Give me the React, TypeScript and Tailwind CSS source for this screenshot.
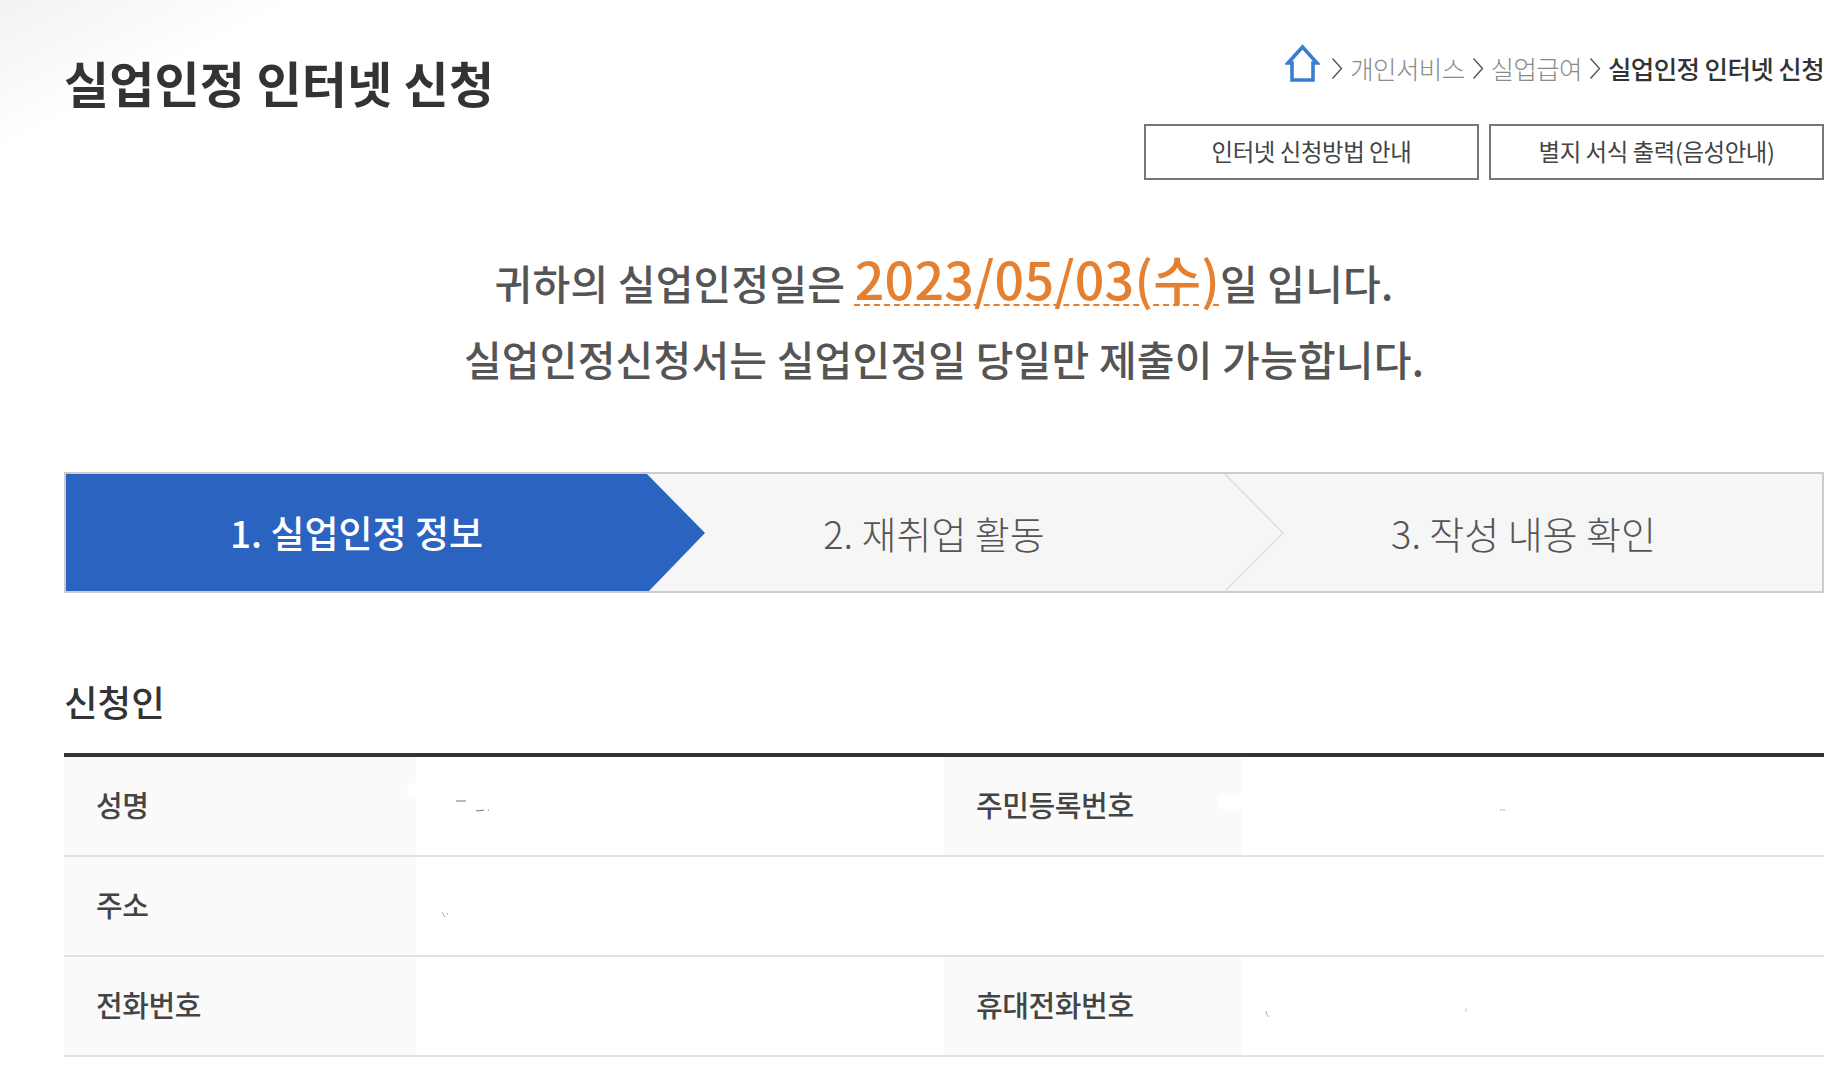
const font = "font-['Noto_Sans_CJK_KR',sans-serif]";

function Chevron() {
  return (
    <svg className="h-[23px] w-[12px] shrink-0" viewBox="0 0 12 23" fill="none" stroke="#555" strokeWidth="1.4">
      <path d="M1.5 1.5l9 10-9 10" />
    </svg>
  );
}

function HomeIcon() {
  return (
    <svg className="mb-[3px] h-[38px] w-[35px] shrink-0" viewBox="0 0 35 38" fill="none" stroke="#3b7dd0" strokeWidth="3.6">
      <path d="M3 19L17.5 3 32 19h-4v17H7V19z" />
    </svg>
  );
}

function Breadcrumb() {
  return (
    <nav className="flex h-[41px] items-end justify-end gap-[11px] text-[25.5px] leading-[34px] tracking-[-0.6px]">
      <HomeIcon />
      <span className="flex h-[34px] items-center gap-[7px]">
        <Chevron />
        <span className="font-light text-[#8a8a8a]">개인서비스</span>
        <Chevron />
        <span className="font-light text-[#8a8a8a]">실업급여</span>
        <Chevron />
        <span className="font-medium text-[#333]">실업인정 인터넷 신청</span>
      </span>
    </nav>
  );
}

function OutlineButton({ children }: { children: React.ReactNode }) {
  return (
    <button className="flex h-[56px] w-[335px] items-center justify-center border-2 border-[#777] bg-white text-[23.4px] text-[#444] tracking-[-0.4px]">
      {children}
    </button>
  );
}

function Steps() {
  return (
    <ol className="mt-[75px] flex h-[121px] border-2 border-[#ccc] bg-[#f6f6f6] text-[38px] font-light text-[#555]">
      <li className="relative flex w-[581px] items-center justify-center bg-[#2b63c0] text-[37px] font-medium text-white">
        <span>1. 실업인정 정보</span>
        <svg className="absolute left-full top-0 z-10 h-full w-[59px]" viewBox="0 0 59 117" preserveAspectRatio="none">
          <path d="M0 0L58 59 2 117H0z" fill="#2b63c0" />
        </svg>
      </li>
      <li className="relative flex w-[578px] items-center justify-center">
        <span className="ml-[-4px]">2. 재취업 활동</span>
        <svg className="absolute left-full top-0 z-10 h-full w-[59px]" viewBox="0 0 59 117" preserveAspectRatio="none" fill="none">
          <path d="M0 0L58 59 0 117" stroke="#ddd" strokeWidth="1.5" />
        </svg>
      </li>
      <li className="flex flex-1 items-center justify-center">3. 작성 내용 확인</li>
    </ol>
  );
}

function Label({ children }: { children: React.ReactNode }) {
  return <div className="flex items-center bg-[#fafafa] pb-[2px] pl-[32px] text-[29px] font-medium text-[#444] tracking-[-0.4px]">{children}</div>;
}

// leftovers of the masked personal data in the value cells
function Smudge({ className, d }: { className: string; d: string }) {
  return (
    <svg className={`absolute ${className}`} viewBox="0 0 40 20" fill="none" stroke="#777" strokeWidth="1.2">
      <path d={d} />
    </svg>
  );
}

function Row({ cells, value1, value2 }: { cells: string[]; value1?: React.ReactNode; value2?: React.ReactNode }) {
  return (
    <div className="grid h-[100px] grid-cols-[352px_528px_298px_1fr] border-b-2 border-[#e2e2e2]">
      <Label>{cells[0]}</Label>
      <div className="relative">{value1}</div>
      {cells[1] ? <Label>{cells[1]}</Label> : <div />}
      <div className="relative">{value2}</div>
    </div>
  );
}

export default function App() {
  return (
    <div className={`${font} relative min-h-[1072px] overflow-hidden bg-white bg-[linear-gradient(153deg,#f2f2f2_0%,#ffffff_45%)] bg-[length:330px_170px] bg-no-repeat pl-[64px] pr-[24px]`}>
      <header className="flex items-start justify-between pt-[44px]">
        <h1 className="text-[49px] leading-[76px] font-semibold text-[#333] tracking-[0.2px]">실업인정 인터넷 신청</h1>
        <div className="flex flex-col items-end">
          <Breadcrumb />
          <div className="mt-[39px] flex gap-[10px]">
            <OutlineButton>인터넷 신청방법 안내</OutlineButton>
            <OutlineButton>별지 서식 출력(음성안내)</OutlineButton>
          </div>
        </div>
      </header>

      <div className="mt-[60px] text-center text-[41px] leading-[76px] font-medium text-[#555] tracking-[0.2px]">
        <p>
          귀하의 실업인정일은{' '}
          <span className="text-[52px] text-[#e58030] underline decoration-dashed decoration-2 underline-offset-[4px]">2023/05/03(수)</span>일 입니다.
        </p>
        <p>실업인정신청서는 실업인정일 당일만 제출이 가능합니다.</p>
      </div>

      <div className="pt-[1px]">
        <Steps />
      </div>

      <h2 className="mt-[84px] text-[36.5px] leading-[50px] font-medium text-[#333]">신청인</h2>
      <div className="mt-[26px] border-t-4 border-[#333]">
        <Row
          cells={['성명', '주민등록번호']}
          value1={
            <>
              <div className="absolute left-[-9px] top-[26px] h-[16px] w-[14px] rounded-full bg-white" />
              <Smudge className="left-[38px] top-[38px] h-[20px] w-[40px]" d="M2 6h10M22 16l8-1M34 15h1" />
            </>
          }
          value2={
            <>
              <div className="absolute left-[-25px] top-[36px] h-[18px] w-[27px] rounded-l-full bg-white" />
              <Smudge className="left-[252px] top-[50px] h-[10px] w-[20px]" d="M4 8h1M14 4v4M20 4v4" />
            </>
          }
        />
        <Row cells={['주소', '']} value1={<Smudge className="left-[24px] top-[52px] h-[12px] w-[20px]" d="M4 4l6 10M14 6l1 3" />} />
        <Row
          cells={['전화번호', '휴대전화번호']}
          value2={
            <>
              <Smudge className="left-[20px] top-[52px] h-[12px] w-[20px]" d="M8 2q0 8 6 12" />
              <Smudge className="left-[220px] top-[50px] h-[8px] w-[16px]" d="M10 4v8" />
            </>
          }
        />
      </div>
    </div>
  );
}
